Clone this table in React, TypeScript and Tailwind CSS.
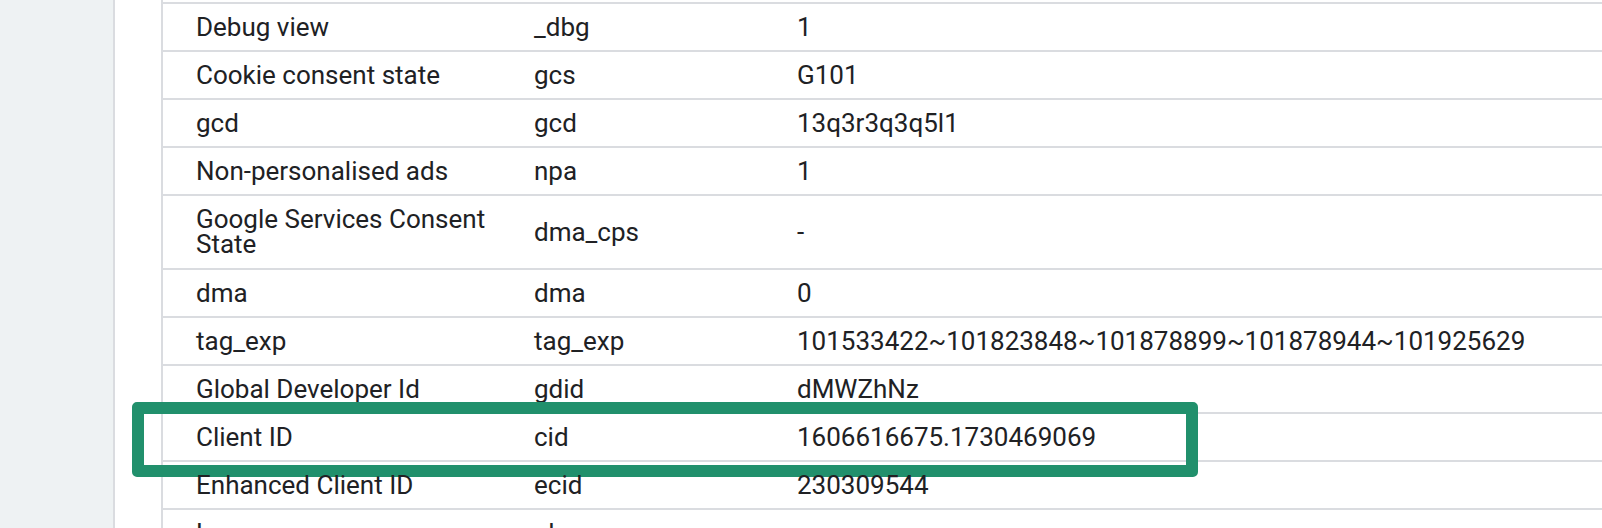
const rows: { label: string; key: string; value: string; tall?: boolean; highlight?: boolean }[] = [
  { label: 'Debug view', key: '_dbg', value: '1' },
  { label: 'Cookie consent state', key: 'gcs', value: 'G101' },
  { label: 'gcd', key: 'gcd', value: '13q3r3q3q5l1' },
  { label: 'Non-personalised ads', key: 'npa', value: '1' },
  { label: 'Google Services Consent State', key: 'dma_cps', value: '-', tall: true },
  { label: 'dma', key: 'dma', value: '0' },
  { label: 'tag_exp', key: 'tag_exp', value: '101533422~101823848~101878899~101878944~101925629' },
  { label: 'Global Developer Id', key: 'gdid', value: 'dMWZhNz' },
  { label: 'Client ID', key: 'cid', value: '1606616675.1730469069', highlight: true },
  { label: 'Enhanced Client ID', key: 'ecid', value: '230309544' },
  { label: 'Language', key: 'ul', value: 'en-us' },
];

export default function App() {
  return (
    <div
      className="flex h-[528px] w-full overflow-hidden bg-white text-[26px] leading-[25px] text-[#202124]"
      style={{ fontFamily: 'Roboto, "Liberation Sans", sans-serif' }}
    >
      {/* side rail */}
      <div className="w-[113px] shrink-0 bg-[#eef2f3]" />
      <div className="w-[48px] shrink-0 border-l-2 border-[#dadce0] bg-white" />

      {/* parameter table */}
      <div className="flex-1 border-l-2 border-[#dadce0]">
        <div className="h-[4px] border-b-2 border-[#dadce0]" />
        {rows.map((r) => (
          <div
            key={r.key}
            className={`relative grid grid-cols-[371px_263px_1fr] items-center border-b-2 border-[#dadce0] ${r.tall ? 'py-[11px]' : 'min-h-[48px]'}`}
          >
            <div className="pl-[33px] pr-[24px]">{r.label}</div>
            <div>{r.key}</div>
            <div>{r.value}</div>
            {r.highlight && (
              <div className="pointer-events-none absolute -left-[31px] -top-[12px] h-[75px] w-[1066px] rounded-[5px] border-[12px] border-[#21906c]" />
            )}
          </div>
        ))}
      </div>
    </div>
  );
}
